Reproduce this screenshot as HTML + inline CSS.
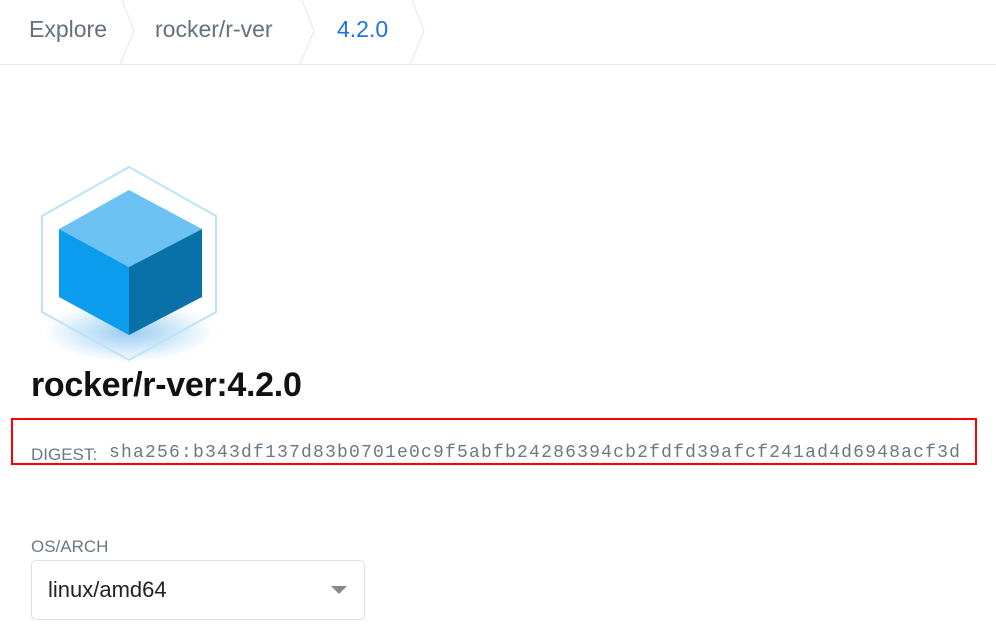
<!DOCTYPE html>
<html><head><meta charset="utf-8"><style>
body{margin:0;width:996px;height:634px;background:#fff;font-family:"Liberation Sans",sans-serif;position:relative;overflow:hidden}
.bc{position:absolute;top:0;left:0;width:996px;height:64px;border-bottom:1px solid #e3e6ea}
.bc span{position:absolute;top:16px;font-size:23px;color:#64707d}
.t{position:absolute;left:31px;top:366px;font-size:34px;font-weight:bold;color:#111;letter-spacing:-0.3px}
.box{position:absolute;left:11px;top:418px;width:962px;height:43px;border:2px solid #f00}
.dg{position:absolute;left:31px;top:445px;font-size:17px;color:#6b7885;white-space:nowrap}
.dg .m{position:absolute;left:78px;top:-2px;font-family:"Liberation Mono",monospace;font-size:18px;letter-spacing:1.2px}
.lab{position:absolute;left:31px;top:537px;font-size:17px;color:#6b7885}
.sel{position:absolute;left:31px;top:560px;width:332px;height:58px;border:1px solid #dde1e5;border-radius:5px}
.sel span{position:absolute;left:16px;top:16px;font-size:22px;color:#222}
.sel i{position:absolute;right:17px;top:25px;width:0;height:0;border-left:8px solid transparent;border-right:8px solid transparent;border-top:8px solid #888}
</style></head><body>
<div class="bc">
<span style="left:29px">Explore</span>
<span style="left:155px">rocker/r-ver</span>
<span style="left:337px;color:#1a73e8">4.2.0</span>
<svg width="996" height="64" style="position:absolute;left:0;top:0"><g fill="none" stroke="#e3e6ea" stroke-width="1">
<path d="M122 0 L134 31 L120 64"/><path d="M302 0 L314 31 L300 64"/><path d="M412 0 L424 31 L410 64"/></g></svg>
</div>
<svg width="240" height="220" style="position:absolute;left:0;top:150px">
<defs><radialGradient id="s" cx="0.5" cy="0.5" r="0.5"><stop offset="0" stop-color="#1a8fe0" stop-opacity="0.45"/><stop offset="1" stop-color="#1a8fe0" stop-opacity="0"/></radialGradient></defs>
<ellipse cx="129" cy="182" rx="85" ry="30" fill="url(#s)"/>
<path d="M129 17 L216 66 L216 162 L129 210 L42 162 L42 66 Z" fill="none" stroke="#bde3f8" stroke-width="2"/>
<path d="M129 40 L202 79 L129 117 L59 79 Z" fill="#6cc3f3"/>
<path d="M59 79 L129 117 L129 185 L59 147 Z" fill="#0b9ced"/>
<path d="M129 117 L202 79 L202 147 L129 185 Z" fill="#0a70a8"/>
</svg>
<div class="t">rocker/r-ver:4.2.0</div>
<div class="box"></div>
<div class="dg">DIGEST: <span class="m">sha256:b343df137d83b0701e0c9f5abfb24286394cb2fdfd39afcf241ad4d6948acf3d</span></div>
<div class="lab">OS/ARCH</div>
<div class="sel"><span>linux/amd64</span><i></i></div>
</body></html>
